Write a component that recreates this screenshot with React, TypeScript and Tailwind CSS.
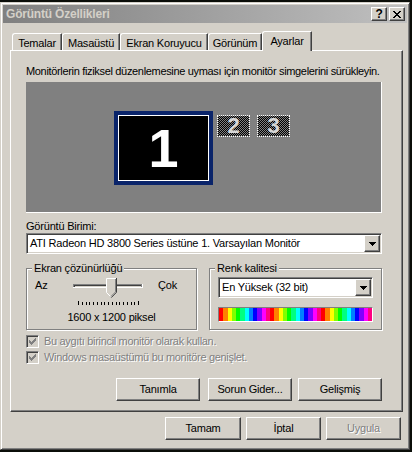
import React from "react";

const raised =
  "bg-[#d4d0c8] border border-t-white border-l-white border-r-[#404040] border-b-[#404040] shadow-[inset_-1px_-1px_#808080]";
const sunken =
  "border border-t-[#808080] border-l-[#808080] border-r-white border-b-white shadow-[inset_1px_1px_#404040,inset_-1px_-1px_#d4d0c8]";

function Pixels({ rows, color, className }: { rows: string[]; color: string; className?: string }) {
  const w = rows[0].length;
  const h = rows.length;
  return (
    <svg width={w} height={h} viewBox={`0 0 ${w} ${h}`} className={className} shapeRendering="crispEdges">
      {rows.flatMap((r, y) =>
        r.split("").map((c, x) =>
          c === "#" ? <rect key={`${x}-${y}`} x={x} y={y} width={1} height={1} fill={color} /> : null
        )
      )}
    </svg>
  );
}

const CLOSE = ["##....##", ".##..##.", "..####..", "...##...", "..####..", ".##..##.", "##....##"];
const ARROW = ["#######", ".#####.", "..###..", "...#..."];
const CHECK = ["......#", ".....##", "#...###", "##.###.", "#####..", ".###...", "..#...."];

function Combo({ text, className }: { text: string; className: string }) {
  return (
    <div className={`${sunken} bg-white h-[21px] p-[1px] flex items-center ${className}`}>
      <span className="flex-1 pl-[2px] whitespace-nowrap overflow-hidden">{text}</span>
      <div className={`${raised} w-[16px] h-[17px] flex items-center justify-center`}>
        <Pixels rows={ARROW} color="#000" />
      </div>
    </div>
  );
}

function Button({ label, className, disabled }: { label: string; className: string; disabled?: boolean }) {
  return (
    <div className={`${raised} h-[23px] flex items-center justify-center ${className}`}>
      <span className={disabled ? "text-[#808080] [text-shadow:1px_1px_0_#fff]" : ""}>{label}</span>
    </div>
  );
}

function Check({ label }: { label: string }) {
  return (
    <div className="h-[13px] flex items-center">
      <div className={`${sunken} bg-[#d4d0c8] w-[13px] h-[13px] flex items-center justify-center`}>
        <Pixels rows={CHECK} color="#808080" />
      </div>
      <span className="ml-[5px] text-[#808080] [text-shadow:1px_1px_0_#fff] whitespace-nowrap tracking-[-0.32px]">
        {label}
      </span>
    </div>
  );
}

function SmallMonitor({ n, id }: { n: string; id: string }) {
  return (
    <div className="relative w-[33px] h-[22px] border border-dotted border-white flex items-center justify-center">
      <svg className="absolute inset-0" width="100%" height="100%">
        <defs>
          <pattern id={id} width="2" height="2" patternUnits="userSpaceOnUse">
            <rect width="2" height="2" fill="#000" />
            <rect width="1" height="1" fill="#808080" />
            <rect x="1" y="1" width="1" height="1" fill="#808080" />
          </pattern>
        </defs>
        <rect width="100%" height="100%" fill={`url(#${id})`} />
      </svg>
      <span className="relative text-[22px] leading-none font-bold text-[#d8d8d8]">{n}</span>
    </div>
  );
}

function Slider() {
  const ticks = Array.from({ length: 17 }, (_, i) => Math.round(8 + i * 3.75));
  return (
    <svg width="76" height="28" viewBox="0 0 76 28" className="shrink-0">
      <g shapeRendering="crispEdges">
        <rect x="3" y="6" width="70" height="4" fill="#fff" />
        <rect x="3" y="6" width="69" height="3" fill="#808080" />
        <rect x="4" y="7" width="67" height="1" fill="#404040" />
        <rect x="4" y="7" width="1" height="2" fill="#404040" />
        <rect x="5" y="8" width="66" height="1" fill="#d4d0c8" />
        {ticks.map((x, i) => (
          <rect key={i} x={x} y={i === 0 || i === 16 ? 23 : 24} width="1" height={i === 0 || i === 16 ? 4 : 3} fill="#000" />
        ))}
      </g>
      <polygon points="36,0 47,0 47,14 41.5,19.5 36,14" fill="#d4d0c8" />
      <path d="M36.5,14.5 V0.5 H46" stroke="#fff" fill="none" />
      <path d="M36.5,14.5 L40.5,18.5" stroke="#fff" fill="none" />
      <path d="M46.5,0 V14.3 L41.3,19.6" stroke="#404040" fill="none" />
      <path d="M45.5,1 V13.9 L41,18.4" stroke="#808080" fill="none" />
    </svg>
  );
}

function ColorBar() {
  const blocks = Array.from({ length: 36 }, (_, i) => (i % 12) * 30);
  const bw = 153 / 36;
  return (
    <svg width="153" height="13" viewBox="0 0 153 13" preserveAspectRatio="none" shapeRendering="crispEdges">
      {blocks.map((h, i) => (
        <rect key={i} x={i * bw} y="0" width={bw + 0.5} height="13" fill={`hsl(${h},100%,50%)`} />
      ))}
    </svg>
  );
}

function Tab({ label, w, selected }: { label: string; w: string; selected?: boolean }) {
  if (selected) {
    return (
      <div
        className={`${w} relative h-[20px] -mb-[1px] bg-[#d4d0c8] border-t border-l border-r border-t-white border-l-white border-r-[#404040] shadow-[inset_-1px_0_#808080] rounded-tl-[3px] rounded-tr-[1px] flex items-start justify-center pt-[3px]`}
      >
        {label}
      </div>
    );
  }
  return (
    <div
      className={`${w} h-[17px] border-t border-l border-r border-t-white border-l-white border-r-[#404040] shadow-[inset_-1px_0_#808080] rounded-tl-[3px] rounded-tr-[1px] flex items-start justify-center pt-[3px]`}
    >
      {label}
    </div>
  );
}

export default function App() {
  return (
    <div className="w-[412px] h-[452px] bg-[#0b0e09] pt-[2px] overflow-hidden font-['Liberation_Sans',Arial,sans-serif] text-[11px] leading-[13px] tracking-[-0.2px] text-black">
      <div className="w-[410px] h-[448px] bg-[#d4d0c8] border border-t-[#d4d0c8] border-l-[#d4d0c8] border-r-[#404040] border-b-[#404040] shadow-[inset_1px_1px_#fff,inset_-1px_-1px_#808080] p-[2px] flex flex-col">
        {/* Title bar */}
        <div className="h-[18px] flex items-center bg-linear-to-r from-[#808080] to-[#c0c0c0] pl-[3px] pr-[2px]">
          <span className="flex-1 text-[12px] font-bold text-[#d4d0c8] tracking-[-0.2px] whitespace-nowrap">
            Görüntü Özellikleri
          </span>
          <div className={`${raised} w-[16px] h-[14px] flex items-center justify-center text-[12px] font-bold leading-none`}>
            ?
          </div>
          <div className={`${raised} ml-[2px] w-[16px] h-[14px] flex items-center justify-center`}>
            <Pixels rows={CLOSE} color="#000" />
          </div>
        </div>

        {/* Tabs */}
        <div className="mt-[8px] ml-[9px] h-[19px] flex items-end relative z-10">
          <Tab label="Temalar" w="w-[50px]" />
          <Tab label="Masaüstü" w="w-[58px]" />
          <Tab label="Ekran Koruyucu" w="w-[88px]" />
          <Tab label="Görünüm" w="w-[54px]" />
          <Tab label="Ayarlar" w="w-[50px]" selected />
        </div>

        {/* Panel */}
        <div className="ml-[7px] w-[393px] h-[362px] border border-t-white border-l-white border-r-[#404040] border-b-[#404040] shadow-[inset_-1px_-1px_#808080] pl-[15px] pt-[14px] flex flex-col">
          <p className="h-[13px] whitespace-nowrap tracking-[-0.33px]">
            Monitörlerin fiziksel düzenlemesine uyması için monitör simgelerini sürükleyin.
          </p>

          <div className="mt-[4px] w-[356px] h-[131px] bg-[#808080] border-b border-r border-white relative">
            <div className="absolute left-[88px] top-[29px] w-[99px] h-[74px] bg-[#0a246a] p-[4px]">
              <div className="w-full h-full bg-black border border-white flex items-center justify-center">
                <span className="text-[54px] leading-none font-bold text-white tracking-normal">1</span>
              </div>
            </div>
            <div className="absolute left-[191px] top-[33px]">
              <SmallMonitor n="2" id="chk2" />
            </div>
            <div className="absolute left-[231px] top-[33px]">
              <SmallMonitor n="3" id="chk3" />
            </div>
          </div>

          <p className="mt-[7px] h-[13px]">Görüntü Birimi:</p>
          <Combo className="w-[356px]" text="ATI Radeon HD 3800 Series üstüne 1. Varsayılan Monitör" />

          <div className="mt-[14px] flex">
            {/* Resolution group */}
            <div className="relative w-[171px] h-[62px] border border-[#808080] shadow-[inset_1px_1px_#fff,1px_1px_#fff] pl-[8px] pt-[9px] flex flex-col">
              <span className="absolute left-[5px] -top-[7px] px-[2px] bg-[#d4d0c8] whitespace-nowrap">
                Ekran çözünürlüğü
              </span>
              <div className="flex items-start">
                <span className="w-[35px] mt-[1px]">Az</span>
                <Slider />
                <span className="ml-[12px] mt-[1px]">Çok</span>
              </div>
              <p className="mt-[5px] -ml-[8px] text-center">1600 x 1200 piksel</p>
            </div>

            {/* Colour group */}
            <div className="relative ml-[12px] w-[173px] h-[62px] border border-[#808080] shadow-[inset_1px_1px_#fff,1px_1px_#fff] pl-[8px] pt-[8px] flex flex-col">
              <span className="absolute left-[5px] -top-[7px] px-[2px] bg-[#d4d0c8] whitespace-nowrap">
                Renk kalitesi
              </span>
              <Combo className="w-[155px]" text="En Yüksek (32 bit)" />
              <div className="mt-[9px] w-[155px] h-[15px] border border-t-[#808080] border-l-[#808080] border-r-white border-b-white">
                <ColorBar />
              </div>
            </div>
          </div>

          <div className="mt-[5px] flex flex-col gap-[3px]">
            <Check label="Bu aygıtı birincil monitör olarak kullan." />
            <Check label="Windows masaüstümü bu monitöre genişlet." />
          </div>

          <div className="mt-[14px] flex">
            <Button label="Tanımla" className="ml-[90px] w-[84px]" />
            <Button label="Sorun Gider..." className="ml-[8px] w-[84px]" />
            <Button label="Gelişmiş" className="ml-[6px] w-[84px]" />
          </div>
        </div>

        {/* Bottom buttons */}
        <div className="mt-[5px] flex">
          <Button label="Tamam" className="ml-[162px] w-[76px]" />
          <Button label="İptal" className="ml-[5px] w-[75px]" />
          <Button label="Uygula" className="ml-[5px] w-[75px]" disabled />
        </div>
      </div>
    </div>
  );
}
